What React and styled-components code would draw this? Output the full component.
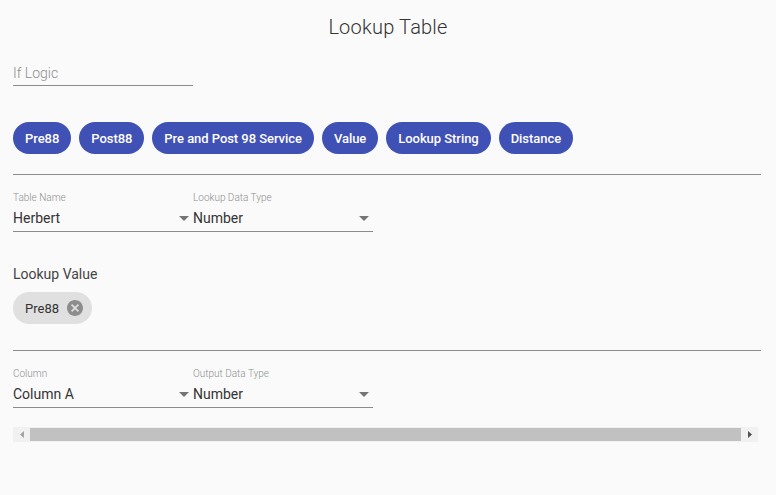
import styled, { createGlobalStyle } from 'styled-components';

const GlobalStyle = createGlobalStyle`
  html, body {
    margin: 0;
    padding: 0;
    background: #fafafa;
  }
  body {
    font-family: 'Roboto', 'Liberation Sans', sans-serif;
  }
`;

const sources = ['Pre88', 'Post88', 'Pre and Post 98 Service', 'Value', 'Lookup String', 'Distance'];

export default function App() {
  return (
    <Page>
      <GlobalStyle />
      <Title>Lookup Table</Title>

      <TextField>
        <Placeholder>If Logic</Placeholder>
      </TextField>

      <ChipRow>
        {sources.map((s) => (
          <SourceChip key={s}>{s}</SourceChip>
        ))}
      </ChipRow>

      <Divider top={20} />

      <SelectRow>
        <Select label="Table Name" value="Herbert" />
        <Select label="Lookup Data Type" value="Number" />
      </SelectRow>

      <SectionLabel>Lookup Value</SectionLabel>
      <ValueChip>
        <span>Pre88</span>
        <CancelIcon />
      </ValueChip>

      <Divider top={26} />

      <SelectRow>
        <Select label="Column" value="Column A" />
        <Select label="Output Data Type" value="Number" />
      </SelectRow>

      <Scrollbar>
        <ScrollButton>
          <svg width="4" height="7" viewBox="0 0 4 7">
            <path d="M4 0 L0 3.5 L4 7 Z" fill="#a3a3a3" />
          </svg>
        </ScrollButton>
        <Thumb />
        <ScrollButton>
          <svg width="4" height="7" viewBox="0 0 4 7">
            <path d="M0 0 L4 3.5 L0 7 Z" fill="#505050" />
          </svg>
        </ScrollButton>
      </Scrollbar>
    </Page>
  );
}

function Select({ label, value }) {
  return (
    <SelectBox>
      <SelectLabel>{label}</SelectLabel>
      <SelectValue>
        <span>{value}</span>
        <svg width="10" height="5" viewBox="0 0 10 5">
          <path d="M0 0 L10 0 L5 5 Z" fill="#757575" />
        </svg>
      </SelectValue>
    </SelectBox>
  );
}

function CancelIcon() {
  return (
    <svg width="16" height="16" viewBox="2 2 20 20">
      <path
        d="M12 2C6.47 2 2 6.47 2 12s4.47 10 10 10 10-4.47 10-10S17.53 2 12 2zm5 13.59L15.59 17 12 13.41 8.41 17 7 15.59 10.59 12 7 8.41 8.41 7 12 10.59 15.59 7 17 8.41 13.41 12 17 15.59z"
        fill="#8d8d8d"
      />
    </svg>
  );
}

const Page = styled.div`
  width: 776px;
  height: 495px;
  box-sizing: border-box;
  padding: 15px 15px 0 13px;
  display: flex;
  flex-direction: column;
  align-items: flex-start;
  overflow: hidden;
`;

const Title = styled.h1`
  align-self: stretch;
  margin: 0 0 0 2px;
  font-size: 20px;
  line-height: 24px;
  font-weight: 300;
  color: #333;
  text-align: center;
  letter-spacing: 0.2px;
`;

const TextField = styled.div`
  width: 180px;
  margin-top: 24px;
  padding-bottom: 2px;
  border-bottom: 1px solid #8c8c8c;
`;

const Placeholder = styled.div`
  font-size: 14px;
  line-height: 20px;
  font-weight: 300;
  color: #8f8f8f;
`;

const ChipRow = styled.div`
  display: flex;
  gap: 8px;
  margin-top: 36px;
`;

const SourceChip = styled.div`
  height: 32px;
  padding: 0 12px;
  border-radius: 16px;
  background: #3f51b5;
  color: #fff;
  font-size: 13px;
  font-weight: 500;
  display: flex;
  align-items: center;
  letter-spacing: -0.05px;
`;

const Divider = styled.div`
  align-self: stretch;
  height: 1px;
  background: #8c8c8c;
  margin-top: ${({ top }) => top}px;
`;

const SelectRow = styled.div`
  display: flex;
  margin-top: 17px;
`;

const SelectBox = styled.div`
  width: 180px;
  display: flex;
  flex-direction: column;
`;

const SelectLabel = styled.div`
  font-size: 10px;
  line-height: 12px;
  color: #8f8f8f;
  font-weight: 300;
`;

const SelectValue = styled.div`
  margin-top: 4px;
  padding-bottom: 3px;
  border-bottom: 1px solid #8c8c8c;
  display: flex;
  align-items: center;
  justify-content: space-between;
  padding-right: 4px;
  font-size: 14px;
  line-height: 20px;
  color: #333;

  svg {
    margin-top: 1px;
  }
`;

const SectionLabel = styled.div`
  margin-top: 32px;
  font-size: 14px;
  line-height: 20px;
  color: #444;
`;

const ValueChip = styled.div`
  margin-top: 8px;
  height: 32px;
  box-sizing: border-box;
  padding: 0 9px 0 12px;
  border-radius: 16px;
  background: #e0e0e0;
  display: flex;
  align-items: center;
  gap: 8px;
  font-size: 13px;
  color: #333;
`;

const Scrollbar = styled.div`
  margin-top: 19px;
  width: 745px;
  height: 15px;
  display: flex;
  align-items: stretch;
  background: #f1f1f1;
`;

const ScrollButton = styled.div`
  width: 17px;
  display: flex;
  align-items: center;
  justify-content: center;
`;

const Thumb = styled.div`
  flex: 1;
  margin: 1px 0;
  background: #c1c1c1;
`;
